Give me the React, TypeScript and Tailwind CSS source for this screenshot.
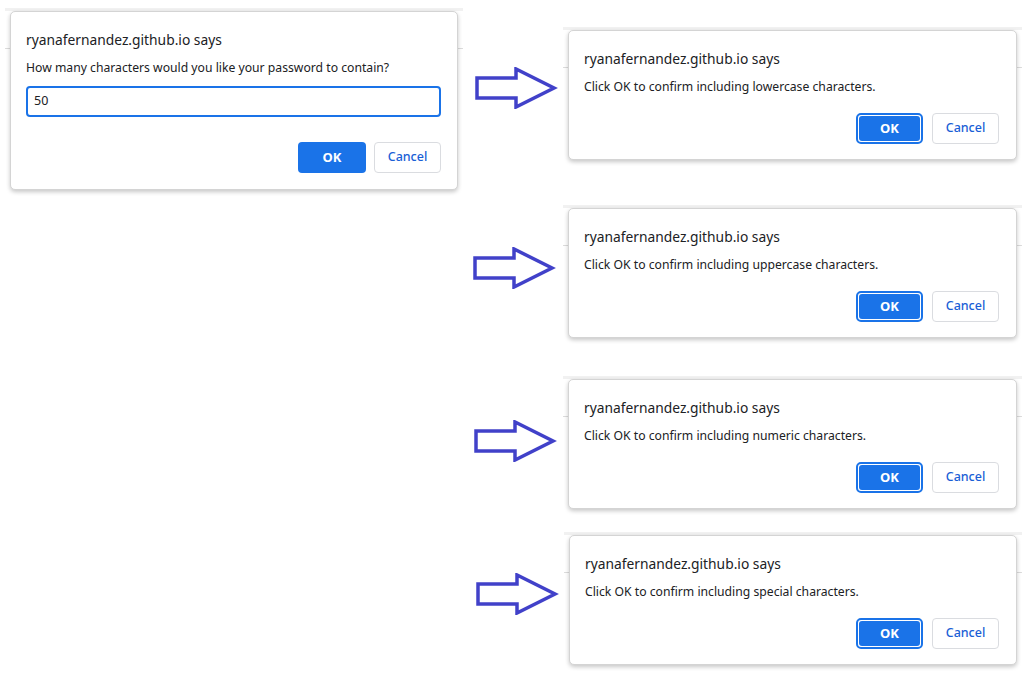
import React from "react";

const font = { fontFamily: '"Noto Sans", "Open Sans", Arial, sans-serif' };

function Arrow() {
  return (
    <svg width="83" height="42" viewBox="0 0 83 42" fill="none">
      <path
        d="M2 11 H41 V2 L79 21 L41 40 V31 H2 Z"
        stroke="#4141c9"
        strokeWidth="3.5"
        strokeLinejoin="miter"
      />
    </svg>
  );
}

function OkButton({ focused }: { focused?: boolean }) {
  if (focused) {
    return (
      <span className="flex h-[31px] w-[67px] rounded-[5px] border-2 border-[#1a73e8] bg-white p-px">
        <span className="flex flex-1 items-center justify-center rounded-[3px] bg-[#1a73e8] text-[13px] font-bold text-white">
          OK
        </span>
      </span>
    );
  }
  return (
    <span className="flex h-[31px] w-[68px] items-center justify-center rounded-[4px] bg-[#1a73e8] text-[13px] font-bold text-white">
      OK
    </span>
  );
}

function CancelButton() {
  return (
    <span className="flex h-[31px] w-[67px] items-center justify-center rounded-[4px] border border-[#dadce0] bg-white text-[12.5px] font-medium text-[#1a5fd6]">
      Cancel
    </span>
  );
}

function Dialog({
  message,
  prompt,
  focused,
}: {
  message: string;
  prompt?: string;
  focused?: boolean;
}) {
  return (
    <div className="relative">
      <div className="absolute -inset-x-[5px] -top-[3px] h-[3px] bg-[#f1f1f1]" />
      <div className="absolute -inset-x-[5px] top-[37px] h-px bg-[#dcdcdc]" />
      <div className="relative flex flex-col rounded-[5px] border border-[#d4d4d4] bg-white pl-[15px] pr-4 pt-[18px] shadow-[0_2px_4px_rgba(0,0,0,0.22)]">
        <div className="h-5 text-[13.8px] leading-5 text-[#202124]">
          ryanafernandez.github.io says
        </div>
        <div className="mt-[9px] h-[18px] text-[12.2px] leading-[18px] text-[#202124]">
          {message}
        </div>
        {prompt !== undefined && (
          <div className="mt-[9px] flex h-[31px] items-center rounded-[4px] border-2 border-[#1a73e8] px-[6px] text-[12.5px] text-[#202124]">
            {prompt}
          </div>
        )}
        <div
          className={
            prompt !== undefined
              ? "mt-[25px] mb-4 flex justify-end gap-2"
              : "mt-[17px] mb-[15px] mr-px flex justify-end gap-[9px]"
          }
        >
          <OkButton focused={focused} />
          <CancelButton />
        </div>
      </div>
    </div>
  );
}

const steps = [
  { text: "lowercase", mt: "mt-[30px]", arrow: "mt-[37px] ml-[17px] w-[93px]" },
  { text: "uppercase", mt: "mt-[48px]", arrow: "mt-[39px] ml-[15px] w-[95px]" },
  { text: "numeric", mt: "mt-[41px]", arrow: "mt-[41px] ml-[16px] w-[94px]" },
  { text: "special", mt: "mt-[26px]", arrow: "mt-[38px] ml-[18px] w-[93px]" },
];

export default function App() {
  return (
    <div style={font} className="flex h-[680px] w-[1033px] overflow-hidden bg-white">
      <div className="ml-[10px] mt-[11px] w-[448px]">
        <Dialog
          message="How many characters would you like your password to contain?"
          prompt="50"
        />
      </div>
      <div className="flex flex-col">
        {steps.map((s, i) => (
          <div key={s.text} className={`${s.mt} flex`}>
            <div className={`${s.arrow} shrink-0`}>
              <Arrow />
            </div>
            <div className={i === 3 ? "w-[448px]" : "w-[449px]"}>
              <Dialog message={`Click OK to confirm including ${s.text} characters.`} focused />
            </div>
          </div>
        ))}
      </div>
    </div>
  );
}
